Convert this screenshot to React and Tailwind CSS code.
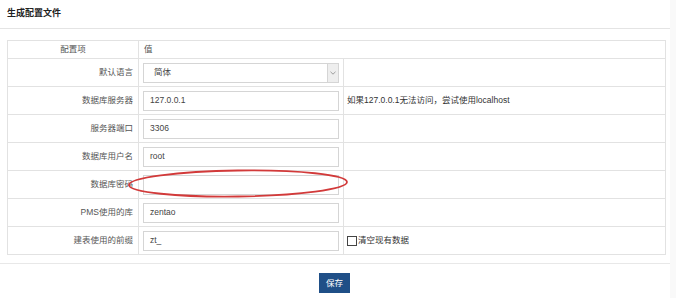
import React from "react";

const font = { fontFamily: '"Liberation Sans", "Noto Sans CJK SC", sans-serif' };

const rows = [
  { label: "数据库服务器", value: "127.0.0.1", note: "如果127.0.0.1无法访问，尝试使用localhost" },
  { label: "服务器端口", value: "3306" },
  { label: "数据库用户名", value: "root" },
  { label: "数据库密码", value: "" },
  { label: "PMS使用的库", value: "zentao" },
  { label: "建表使用的前缀", value: "zt_", check: true },
];

function TextBox({ value }) {
  return (
    <div className="h-[20px] w-[196px] border border-[#d5d5d5] bg-white pl-[6px] flex items-center text-[8.5px] text-[#444]">
      {value}
    </div>
  );
}

export default function App() {
  return (
    <div style={font} className="relative w-[676px] h-[298px] bg-[#f9f9f9] overflow-hidden">
      <div className="w-[670px] h-full bg-white">
        <div className="h-[29px] border-b border-[#e4e4e4] pl-[7px] flex items-center">
          <span className="text-[9px] font-bold text-[#222]">生成配置文件</span>
        </div>

        <div className="pt-[11px] pl-[7px]">
          <table className="w-[659px] border-collapse text-[8.5px] text-[#555]">
            <tbody>
              <tr className="h-[18px]">
                <td className="w-[131px] border border-[#e2e2e2] text-center">配置项</td>
                <td colSpan={2} className="border border-[#e2e2e2] pl-[5px]">值</td>
              </tr>
              <tr className="h-[28px]">
                <td className="border border-[#e2e2e2] text-right pr-[5px]">默认语言</td>
                <td className="w-[204px] border border-[#e2e2e2] px-[4px]">
                  <div className="h-[20px] w-[196px] border border-[#d5d5d5] bg-white flex items-center">
                    <span className="flex-1 pl-[10px] text-[8.5px] text-[#444]">简体</span>
                    <span className="w-[11px] h-full bg-[#eeeeee] border-l border-[#d5d5d5] flex items-center justify-center">
                      <svg width="6" height="4" viewBox="0 0 6 4">
                        <path d="M0.5 0.8 L3 3.2 L5.5 0.8" fill="none" stroke="#888" strokeWidth="0.8" />
                      </svg>
                    </span>
                  </div>
                </td>
                <td className="border border-[#e2e2e2]"></td>
              </tr>
              {rows.map((r) => (
                <tr key={r.label} className="h-[28px]">
                  <td className="border border-[#e2e2e2] text-right pr-[5px]">{r.label}</td>
                  <td className="border border-[#e2e2e2] px-[4px]">
                    <TextBox value={r.value} />
                  </td>
                  <td className="border border-[#e2e2e2] pl-[3px] text-[#333]">
                    {r.note}
                    {r.check && (
                      <span className="flex items-center gap-[1px]">
                        <span className="w-[10px] h-[10px] border border-[#444] bg-white"></span>
                        <span>清空现有数据</span>
                      </span>
                    )}
                  </td>
                </tr>
              ))}
            </tbody>
          </table>
        </div>

        <div className="mt-[8px] border-t border-[#e8e8e8] flex justify-center pt-[9px]">
          <button className="w-[31px] h-[20px] bg-[#1f4f87] text-white text-[8.5px] ml-[-1px]">保存</button>
        </div>
      </div>

      <svg className="absolute left-[126px] top-[168px]" width="226" height="32" viewBox="0 0 226 32">
        <ellipse cx="112" cy="15.5" rx="109" ry="13" fill="none" stroke="#d23a3a" strokeWidth="1.8" transform="rotate(-0.8 112 15.5)" />
      </svg>
    </div>
  );
}
